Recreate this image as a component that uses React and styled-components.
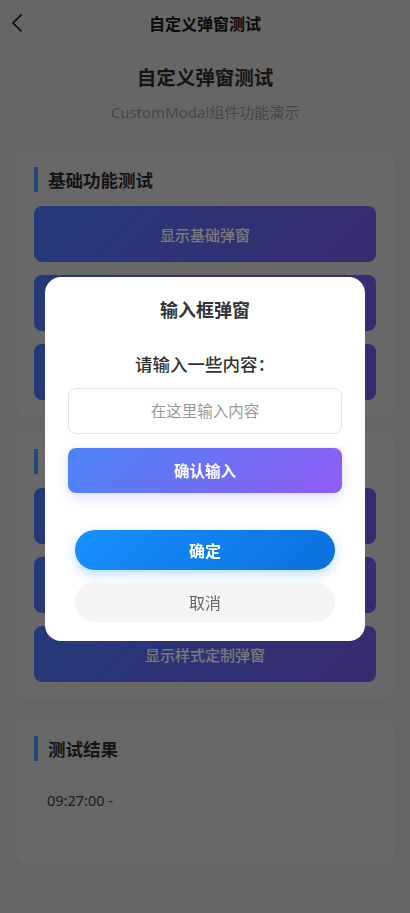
import React, { useState } from "react";
import styled, { createGlobalStyle } from "styled-components";

const GlobalStyle = createGlobalStyle`
  body {
    margin: 0;
    font-family: "Noto Sans", "Noto Sans CJK SC", sans-serif;
    background: #cccccc;
  }
`;

const sections = [
  {
    title: "基础功能测试",
    buttons: ["显示基础弹窗", "显示确认弹窗", "显示输入框弹窗"],
  },
  {
    title: "高级功能测试",
    buttons: ["显示自定义内容弹窗", "显示异步操作弹窗", "显示样式定制弹窗"],
  },
];

export default function App() {
  const [value, setValue] = useState("");

  return (
    <Page>
      <GlobalStyle />
      <NavBar>
        <BackButton>
          <svg width="12" height="20" viewBox="0 0 12 20" fill="none">
            <path d="M10.5 1.5L2 10l8.5 8.5" stroke="#111" strokeWidth="1.6" />
          </svg>
        </BackButton>
        <NavTitle>自定义弹窗测试</NavTitle>
      </NavBar>

      <Header>
        <PageTitle>自定义弹窗测试</PageTitle>
        <Subtitle>CustomModal组件功能演示</Subtitle>
      </Header>

      {sections.map((s) => (
        <Card key={s.title}>
          <SectionTitle>{s.title}</SectionTitle>
          <ButtonList>
            {s.buttons.map((b) => (
              <DemoButton key={b}>{b}</DemoButton>
            ))}
          </ButtonList>
        </Card>
      ))}

      <Card $spaced>
        <SectionTitle>测试结果</SectionTitle>
        <ResultBox>
          <ResultLine>09:27:00 -</ResultLine>
        </ResultBox>
      </Card>

      <Mask>
        <Modal>
          <ModalTitle>输入框弹窗</ModalTitle>
          <ModalBody>
            <Prompt>请输入一些内容：</Prompt>
            <TextInput
              placeholder="在这里输入内容"
              value={value}
              onChange={(e) => setValue(e.target.value)}
            />
            <SubmitButton>确认输入</SubmitButton>
          </ModalBody>
          <ModalFooter>
            <RoundButton $primary>确定</RoundButton>
            <RoundButton>取消</RoundButton>
          </ModalFooter>
        </Modal>
      </Mask>
    </Page>
  );
}

const Page = styled.div`
  min-height: 913px;
  background: #cccccc;
  padding-bottom: 40px;
`;

const NavBar = styled.div`
  position: relative;
  height: 46px;
  display: flex;
  align-items: center;
  justify-content: center;
`;

const BackButton = styled.div`
  position: absolute;
  left: 11px;
  top: 13px;
  display: flex;
`;

const NavTitle = styled.span`
  font-size: 16px;
  font-weight: 700;
  color: #111;
`;

const Header = styled.div`
  display: flex;
  flex-direction: column;
  align-items: center;
  padding-top: 19px;
  margin-bottom: 28px;
`;

const PageTitle = styled.h1`
  margin: 0;
  font-size: 19.5px;
  line-height: 26px;
  font-weight: 700;
  color: #2a2a2a;
`;

const Subtitle = styled.p`
  margin: 11px 0 0;
  font-size: 15px;
  line-height: 20px;
  color: #8c8c8c;
`;

const Card = styled.div`
  margin: ${(p) => (p.$spaced ? "20px" : "0")} 15px 15px;
  padding: 17px 19px;
  background: #d1d1d1;
  border-radius: 12px;
  box-shadow: 0 2px 8px rgba(0, 0, 0, 0.03);
`;

const SectionTitle = styled.div`
  display: flex;
  align-items: center;
  height: 25px;
  padding-left: 10px;
  border-left: 4px solid #3d8ef5;
  font-size: 17.5px;
  font-weight: 700;
  color: #2a2a2a;
`;

const ButtonList = styled.div`
  display: flex;
  flex-direction: column;
  gap: 13px;
  margin-top: 14px;
`;

const DemoButton = styled.button`
  height: 56px;
  border: none;
  border-radius: 8px;
  background: linear-gradient(135deg, #4874f4, #7454e0);
  color: #f4f4f4;
  font-family: inherit;
  font-size: 15px;
  font-weight: 500;
`;

const ResultBox = styled.div`
  margin-top: 14px;
  min-height: 72px;
  padding: 13px;
  box-sizing: border-box;
  background: #cfcfcf;
  border-radius: 8px;
`;

const ResultLine = styled.div`
  font-size: 14.5px;
  line-height: 24px;
  color: #3a3a3a;
`;

const Mask = styled.div`
  position: fixed;
  inset: 0;
  padding-top: 4px;
  background: rgba(0, 0, 0, 0.5);
  display: flex;
  align-items: center;
  justify-content: center;
`;

const Modal = styled.div`
  width: 320px;
  background: #ffffff;
  border-radius: 16px;
  padding: 21px 0 19px;
  box-sizing: border-box;
  display: flex;
  flex-direction: column;
`;

const ModalTitle = styled.div`
  text-align: center;
  font-size: 18px;
  line-height: 24px;
  font-weight: 700;
  color: #333;
`;

const ModalBody = styled.div`
  display: flex;
  flex-direction: column;
  padding: 30px 23px 0;
`;

const Prompt = styled.div`
  text-align: center;
  font-size: 17.5px;
  line-height: 24px;
  font-weight: 500;
  color: #333;
  margin-bottom: 12px;
`;

const TextInput = styled.input`
  height: 46px;
  box-sizing: border-box;
  border: 1px solid #e5e5e5;
  border-radius: 8px;
  text-align: center;
  font-family: inherit;
  font-size: 15.5px;
  color: #333;
  outline: none;

  &::placeholder {
    color: #999;
  }
`;

const SubmitButton = styled.button`
  margin-top: 14px;
  height: 45px;
  border: none;
  border-radius: 8px;
  background: linear-gradient(135deg, #4a84f6, #905cf5);
  box-shadow: 0 4px 12px rgba(102, 126, 234, 0.25);
  color: #ffffff;
  font-family: inherit;
  font-size: 15.5px;
  font-weight: 700;
`;

const ModalFooter = styled.div`
  display: flex;
  flex-direction: column;
  gap: 12px;
  padding: 37px 30px 0;
`;

const RoundButton = styled.button`
  height: 40px;
  border: none;
  border-radius: 20px;
  font-family: inherit;
  font-size: 16px;
  font-weight: ${(p) => (p.$primary ? 700 : 400)};
  color: ${(p) => (p.$primary ? "#ffffff" : "#666")};
  background: ${(p) =>
    p.$primary ? "linear-gradient(135deg, #1890ff, #0a6fdc)" : "#f5f5f5"};
  box-shadow: ${(p) =>
    p.$primary ? "0 4px 12px rgba(24, 144, 255, 0.3)" : "none"};
`;
